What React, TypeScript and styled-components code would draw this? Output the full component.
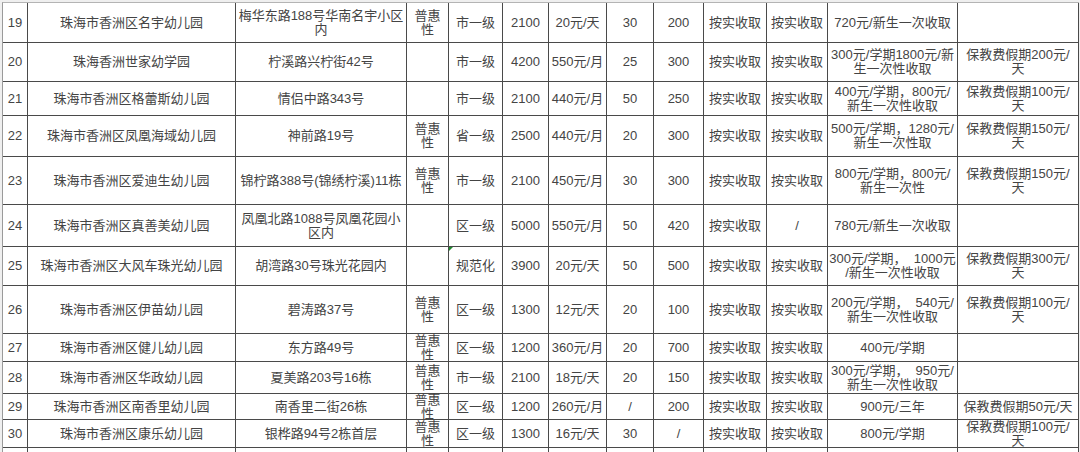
import React from 'react';
import styled, { createGlobalStyle } from 'styled-components';

const GlobalStyle = createGlobalStyle`
    html, body {
        margin: 0;
        padding: 0;
        background: #efefef;
        overflow: hidden;
    }
    body {
        font-family: "Liberation Sans", "Noto Sans CJK SC", sans-serif;
        color: #444;
    }
`;

const COLUMN_WIDTHS = [25, 208, 171, 42, 54, 46, 58, 47, 50, 63, 61, 130, 121];

type Kindergarten = {
    height: number;
    cells: string[];
    flagCell?: number;
};

const rows: Kindergarten[] = [
    {
        height: 40,
        cells: ['19', '珠海市香洲区名宇幼儿园', '梅华东路188号华南名宇小区\n内', '普惠\n性', '市一级', '2100', '20元/天', '30', '200', '按实收取', '按实收取', '720元/新生一次收取', ''],
    },
    {
        height: 39,
        cells: ['20', '珠海香洲世家幼学园', '柠溪路兴柠街42号', '', '市一级', '4200', '550元/月', '25', '300', '按实收取', '按实收取', '300元/学期1800元/新\n生一次性收取', '保教费假期200元/\n天'],
    },
    {
        height: 34,
        cells: ['21', '珠海市香洲区格蕾斯幼儿园', '情侣中路343号', '', '市一级', '2100', '440元/月', '50', '250', '按实收取', '按实收取', '400元/学期，800元/\n新生一次性收取', '保教费假期100元/\n天'],
    },
    {
        height: 41,
        cells: ['22', '珠海市香洲区凤凰海域幼儿园', '神前路19号', '普惠\n性', '省一级', '2500', '440元/月', '20', '300', '按实收取', '按实收取', '500元/学期，1280元/\n新生一次性取', '保教费假期150元/\n天'],
    },
    {
        height: 48,
        cells: ['23', '珠海市香洲区爱迪生幼儿园', '锦柠路388号(锦绣柠溪)11栋', '普惠\n性', '市一级', '2100', '450元/月', '30', '300', '按实收取', '按实收取', '800元/学期，800元/\n新生一次性', '保教费假期150元/\n天'],
    },
    {
        height: 42,
        cells: ['24', '珠海市香洲区真善美幼儿园', '凤凰北路1088号凤凰花园小\n区内', '', '区一级', '5000', '550元/月', '50', '420', '按实收取', '/', '780元/新生一次收取', ''],
    },
    {
        height: 39,
        flagCell: 4,
        cells: ['25', '珠海市香洲区大风车珠光幼儿园', '胡湾路30号珠光花园内', '', '规范化', '3900', '20元/天', '50', '500', '按实收取', '按实收取', '300元/学期，  1000元\n/新生一次性收取', '保教费假期300元/\n天'],
    },
    {
        height: 48,
        cells: ['26', '珠海市香洲区伊苗幼儿园', '碧涛路37号', '普惠\n性', '区一级', '1300', '12元/天', '20', '100', '按实收取', '按实收取', '200元/学期，  540元/\n新生一次性收取', '保教费假期100元/\n天'],
    },
    {
        height: 28,
        cells: ['27', '珠海市香洲区健儿幼儿园', '东方路49号', '普惠\n性', '区一级', '1200', '360元/月', '20', '700', '按实收取', '按实收取', '400元/学期', ''],
    },
    {
        height: 32,
        cells: ['28', '珠海市香洲区华政幼儿园', '夏美路203号16栋', '普惠\n性', '市一级', '2100', '18元/天', '20', '150', '按实收取', '按实收取', '300元/学期，  950元/\n新生一次性收取', ''],
    },
    {
        height: 26,
        cells: ['29', '珠海市香洲区南香里幼儿园', '南香里二街26栋', '普惠\n性', '区一级', '1200', '260元/月', '/', '200', '按实收取', '按实收取', '900元/三年', '保教费假期50元/天'],
    },
    {
        height: 28,
        cells: ['30', '珠海市香洲区康乐幼儿园', '银桦路94号2栋首层', '普惠\n性', '区一级', '1300', '16元/天', '30', '/', '按实收取', '按实收取', '800元/学期', '保教费假期100元/\n天'],
    },
    {
        height: 40,
        cells: ['', '', '', '普惠\n性', '', '', '', '', '', '', '', '', ''],
    },
];

const Sheet = styled.table`
    margin: 2px 0 0 2px;
    border-collapse: separate;
    border-spacing: 0;
    table-layout: fixed;
    width: 1077px;
    background: #fff;
    border-top: 1px solid #b4b4b4;
    border-left: 1px solid #9a9a9a;
`;

const Cell = styled.td`
    padding: 0;
    border-right: 1px solid #4a4a4a;
    border-bottom: 1px solid #4a4a4a;
    vertical-align: top;
    overflow: visible;
`;

const CellBox = styled.div<{ $height: number; $flag?: boolean }>`
    position: relative;
    height: ${(p) => p.$height}px;
    display: flex;
    align-items: center;
    justify-content: center;
    padding: 0 2px;
    font-size: 13px;
    line-height: 14px;
    text-align: center;
    white-space: pre;
    color: #444;

    &::before {
        content: '';
        display: ${(p) => (p.$flag ? 'block' : 'none')};
        position: absolute;
        top: 0;
        left: 0;
        border-top: 4px solid #1f8a2e;
        border-right: 4px solid transparent;
    }
`;

function KindergartenRow({ row }: { row: Kindergarten }) {
    return (
        <tr>
            {row.cells.map((text, i) => (
                <Cell key={i}>
                    <CellBox $height={row.height - 1} $flag={row.flagCell === i}>
                        {text}
                    </CellBox>
                </Cell>
            ))}
        </tr>
    );
}

export default function App() {
    return (
        <>
            <GlobalStyle />
            <Sheet>
                <colgroup>
                    {COLUMN_WIDTHS.map((w, i) => (
                        <col key={i} style={{ width: w }} />
                    ))}
                </colgroup>
                <tbody>
                    {rows.map((row, i) => (
                        <KindergartenRow key={i} row={row} />
                    ))}
                </tbody>
            </Sheet>
        </>
    );
}
